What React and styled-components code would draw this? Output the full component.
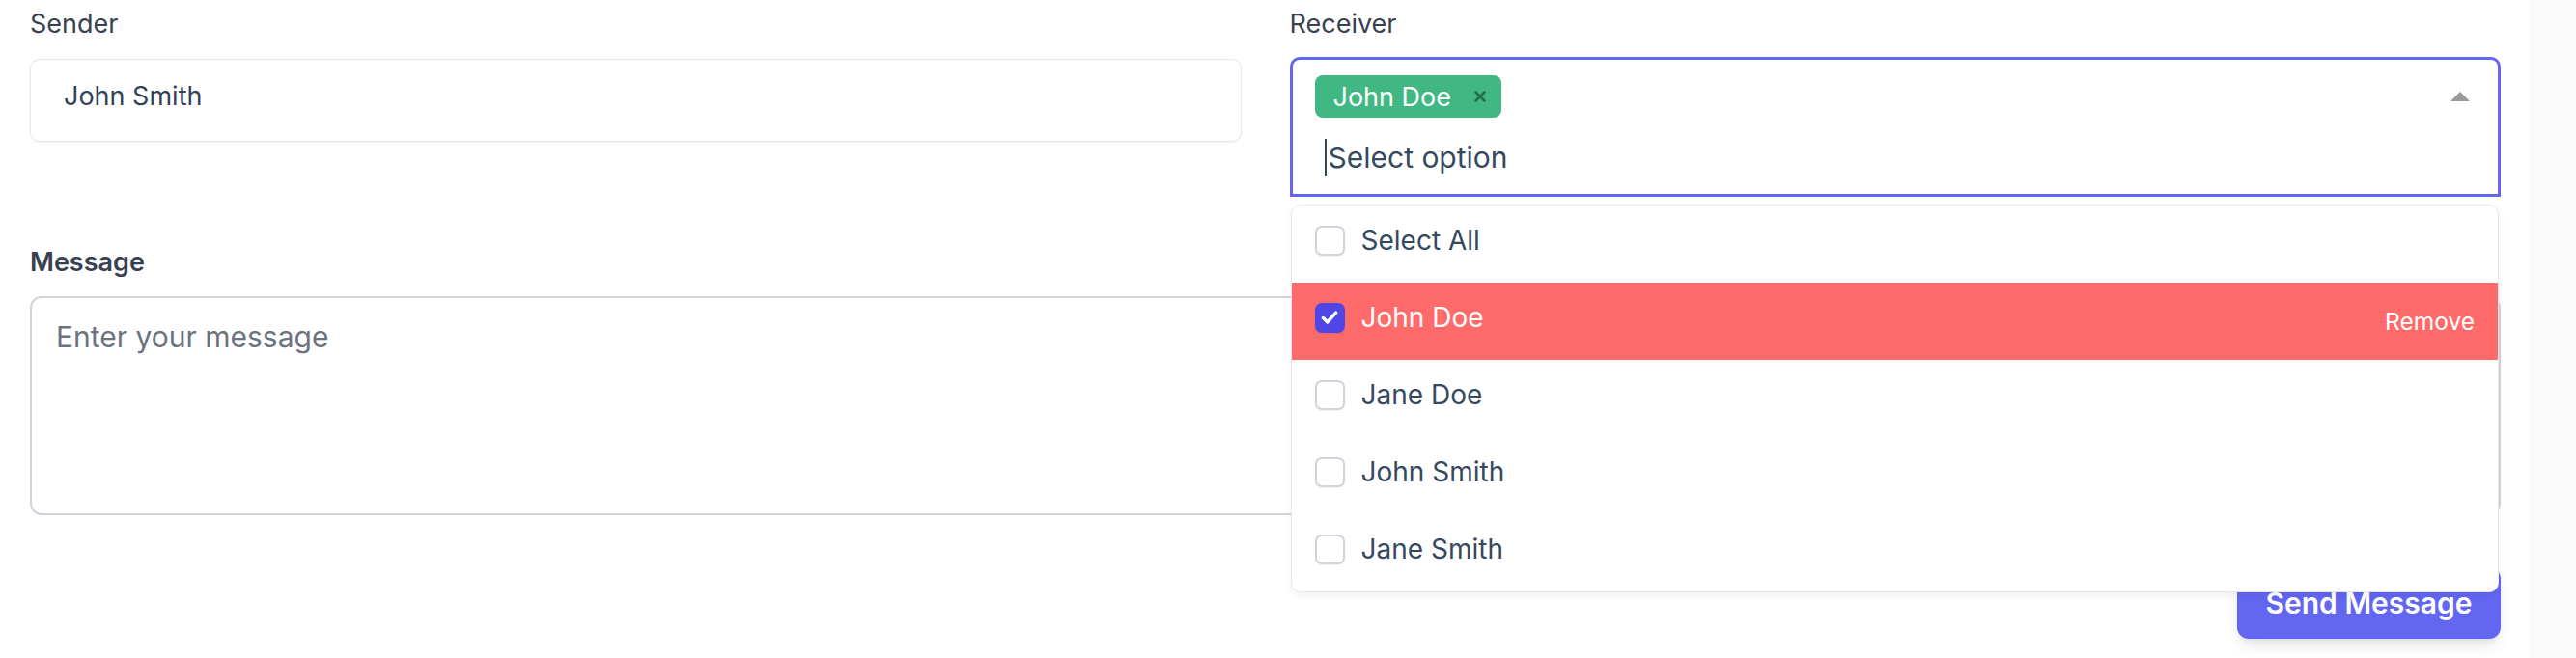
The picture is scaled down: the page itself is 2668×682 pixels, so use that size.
import React from 'react';
import styled, { createGlobalStyle } from 'styled-components';

const GlobalStyle = createGlobalStyle`
  html, body {
    margin: 0;
    padding: 0;
    background: #ffffff;
  }
  body {
    font-family: Inter, "Noto Sans", "Liberation Sans", sans-serif;
    color: #374151;
  }
  * {
    box-sizing: border-box;
  }
`;

const Page = styled.div`
  display: flex;
  min-height: 100vh;
`;

const Main = styled.main`
  flex: 1;
  padding: 5px 30px 0 31px;
`;

const Track = styled.div`
  width: 48px;
  flex-shrink: 0;
  background: #fafafa;
`;

const TopRow = styled.div`
  display: grid;
  grid-template-columns: 1fr 1fr;
  column-gap: 50px;
  align-items: start;
`;

const Field = styled.div`
  position: relative;
  display: flex;
  flex-direction: column;
  gap: 14px;
`;

const Label = styled.label`
  font-size: 27px;
  line-height: 40px;
  font-weight: ${props => (props.strong ? 600 : 400)};
  color: #374151;
`;

const TextInput = styled.input`
  height: 86px;
  margin-top: 2px;
  width: 100%;
  border: 1.5px solid #e5e7eb;
  border-radius: 10px;
  padding: 0 34px 10px;
  font-family: inherit;
  font-size: 27px;
  color: #334155;
  background: #fff;
  box-shadow: 0 1px 2px rgba(0, 0, 0, 0.05);
  outline: none;
`;

const Select = styled.div`
  height: 145px;
  border: 3px solid #6366f1;
  border-radius: 10px 10px 0 0;
  padding: 16px 29px 0 23px;
  display: flex;
  flex-direction: column;
  gap: 22px;
  background: #fff;
`;

const TagRow = styled.div`
  display: flex;
  align-items: center;
  justify-content: space-between;
`;

const Tag = styled.span`
  display: inline-flex;
  align-items: center;
  gap: 24px;
  height: 44px;
  padding: 0 16px 0 19px;
  border-radius: 8px;
  background: #41b883;
  color: #fff;
  font-size: 27px;
`;

const Caret = styled.span`
  width: 0;
  height: 0;
  border-left: 10px solid transparent;
  border-right: 10px solid transparent;
  border-bottom: 10px solid #999;
`;

const Search = styled.div`
  margin-left: 10px;
  height: 38px;
  display: flex;
  align-items: center;
  font-size: 30px;
  color: #35495e;
  &::before {
    content: '';
    width: 2px;
    height: 38px;
    margin-right: 2px;
    background: #35495e;
  }
`;

const Dropdown = styled.ul`
  position: absolute;
  top: calc(100% + 8px);
  left: 1px;
  right: 2px;
  z-index: 10;
  margin: 0;
  padding: 0;
  list-style: none;
  background: #fff;
  border: 1.5px solid #e5e7eb;
  border-radius: 10px;
  overflow: hidden;
  box-shadow: 0 4px 8px rgba(0, 0, 0, 0.06);
`;

const Option = styled.li`
  height: 80px;
  padding: 0 24px;
  display: flex;
  align-items: center;
  justify-content: space-between;
  background: ${props => (props.active ? '#ff6a6a' : '#fff')};
  color: ${props => (props.active ? '#fff' : '#35495e')};
`;

const OptionLabel = styled.span`
  display: flex;
  align-items: center;
  gap: 17px;
  margin-bottom: 8px;
  font-size: 28px;
`;

const Box = styled.span`
  width: 31px;
  height: 31px;
  border-radius: 7px;
  display: inline-flex;
  align-items: center;
  justify-content: center;
  background: ${props => (props.checked ? '#4f46e5' : '#fff')};
  border: ${props => (props.checked ? 'none' : '2px solid #d1d5db')};
  box-shadow: 0 1px 2px rgba(0, 0, 0, 0.06);
`;

const Hint = styled.span`
  font-size: 24.5px;
  color: #fff;
`;

const Message = styled.div`
  margin-top: 48px;
  display: flex;
  flex-direction: column;
  gap: 15px;
`;

const TextArea = styled.textarea`
  height: 227px;
  width: 100%;
  resize: none;
  border: 2px solid #d1d5db;
  border-radius: 12px;
  padding: 18px 25px;
  font-family: inherit;
  font-size: 30px;
  line-height: 45px;
  color: #334155;
  outline: none;
  &::placeholder {
    color: #6b7280;
  }
`;

const Actions = styled.div`
  display: flex;
  justify-content: flex-end;
  margin-top: 54px;
`;

const SendButton = styled.button`
  width: 273px;
  height: 74px;
  border: none;
  border-radius: 12px;
  background: #6366f1;
  color: #fff;
  font-family: inherit;
  font-size: 30px;
  font-weight: 600;
  box-shadow: 0 10px 15px -3px rgba(0, 0, 0, 0.1), 0 4px 6px -4px rgba(0, 0, 0, 0.1);
`;

const people = ['Select All', 'John Doe', 'Jane Doe', 'John Smith', 'Jane Smith'];

function Check() {
  return (
    <svg width="22" height="22" viewBox="0 0 20 20" fill="none">
      <path d="M4 10.5l4 4 8-9" stroke="#fff" strokeWidth="3.2" strokeLinecap="round" strokeLinejoin="round" />
    </svg>
  );
}

function Cross() {
  return (
    <svg width="12" height="12" viewBox="0 0 12 12">
      <path d="M1.5 1.5l9 9M10.5 1.5l-9 9" stroke="#266d4d" strokeWidth="2.6" strokeLinecap="round" />
    </svg>
  );
}

export default function App() {
  const selected = 'John Doe';
  return (
    <Page>
      <GlobalStyle />
      <Main>
        <TopRow>
          <Field>
            <Label>Sender</Label>
            <TextInput defaultValue="John Smith" />
          </Field>
          <Field>
            <Label>Receiver</Label>
            <Select>
              <TagRow>
                <Tag>
                  {selected}
                  <Cross />
                </Tag>
                <Caret />
              </TagRow>
              <Search>Select option</Search>
            </Select>
            <Dropdown>
              {people.map(p => (
                <Option key={p} active={p === selected}>
                  <OptionLabel>
                    <Box checked={p === selected}>{p === selected && <Check />}</Box>
                    {p}
                  </OptionLabel>
                  {p === selected && <Hint>Remove</Hint>}
                </Option>
              ))}
            </Dropdown>
          </Field>
        </TopRow>
        <Message>
          <Label strong>Message</Label>
          <TextArea placeholder="Enter your message" />
        </Message>
        <Actions>
          <SendButton>Send Message</SendButton>
        </Actions>
      </Main>
      <Track />
    </Page>
  );
}
